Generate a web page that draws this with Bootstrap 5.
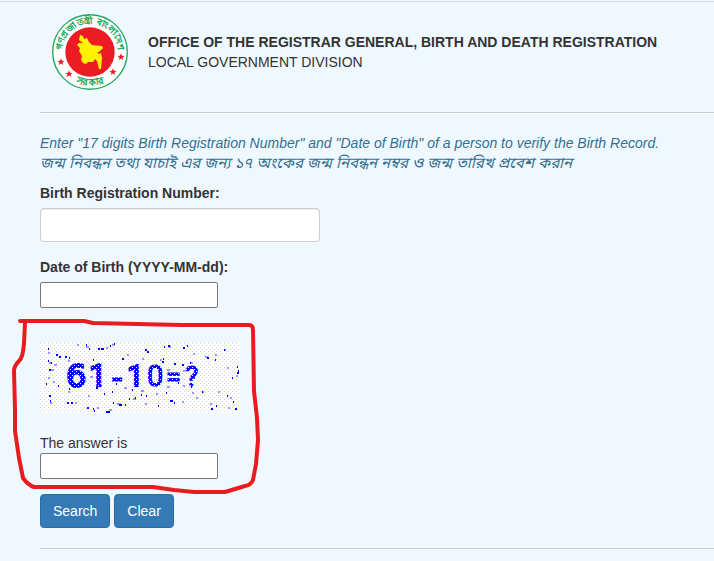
<!DOCTYPE html>
<html lang="en">
<head>
<meta charset="utf-8">
<meta name="viewport" content="width=device-width, initial-scale=1">
<title>Birth and Death Registration</title>
<link href="https://cdn.jsdelivr.net/npm/bootstrap@5.3.0/dist/css/bootstrap.min.css" rel="stylesheet">
<style>
body { background: #f0f8ff; color: #333; font: 14px/20px "Liberation Sans", Arial, sans-serif; }
.page { border-top: 1px solid #ddd; margin-top: 1px; padding-left: 40px; }
.masthead { padding: 12px 0 22px 12px; gap: 20px; border-bottom: 1px solid #ccc; }
.masthead h1 { font-size: 14px; line-height: 20px; }
.hint { color: #31708f; margin: 20px 0 10px; }
.hint-bn { font-size: 15px; font-family: "Liberation Sans", "Noto Sans Bengali", "Lohit Bengali", sans-serif; }
.brn { width: 280px; height: 34px; border-color: #ccc; border-radius: 4px; margin: 5px 0 15px; box-shadow: inset 0 1px 1px rgba(0,0,0,.075); }
.plain { width: 178px; height: 26px; border: 1px solid #767676; border-radius: 2px; padding: 1px 4px; background: #fff; }
.dob { margin-top: 5px; }
.challenge { padding: 35px 0 15px; }
.sketch { left: -28px; top: 10px; pointer-events: none; }
.captcha { margin-bottom: 20px; }
.btn-form { --bs-btn-color: #fff; --bs-btn-bg: #337ab7; --bs-btn-border-color: #2e6da4; --bs-btn-hover-color: #fff; --bs-btn-hover-bg: #286090; --bs-btn-font-size: 14px; --bs-btn-line-height: 20px; --bs-btn-padding-x: 12px; --bs-btn-padding-y: 6px; --bs-btn-border-radius: 4px; }
.actions { padding-bottom: 20px; border-bottom: 1px solid #ccc; }
</style>
<script src="https://cdn.jsdelivr.net/npm/bootstrap@5.3.0/dist/js/bootstrap.bundle.min.js" defer></script>
</head>
<body>
<div class="page">
  <header class="masthead d-flex align-items-center">
    <svg width="76" height="76" viewBox="0 0 76 76" role="img" aria-label="Government seal">
      <defs>
        <path id="arcTop" d="M10.500 43A28 28 0 1 1 65.500 43"/>
        <path id="arcBottom" d="M14 64A42 42 0 0 0 62 64"/>
        <path id="star" d="M0-3.700L1-1.200L3.600-1.100L1.500.5L2.300 3.100L0 1.600L-2.300 3.100L-1.500.5L-3.600-1.100L-1-1.200Z"/>
      </defs>
      <circle cx="38" cy="38" r="37.300" fill="#fff" stroke="#22ab62" stroke-width="1.400"/>
      <circle cx="38" cy="38" r="24.700" fill="#ed1c24"/>
      <path fill="#fff200" d="M28 21L31 22L32 25L35 24L37 28L40 31L50 32L51 34L47 38L45 38L47 40L49 39L50 44L49 55L47 55L45 47L43 45L41 48L36 48L34 50L31 49L29 46L30 42L27 37L28 34L25 31L27 29L31 29L27 26Z"/>
      <g fill="#ed1c24"><use href="#star" x="9" y="48"/><use href="#star" x="17" y="60"/><use href="#star" x="61" y="58"/><use href="#star" x="69" y="43"/></g>
      <g fill="#16a65a" stroke="#16a65a" stroke-width=".4" font-size="9">
        <text text-anchor="middle"><textPath href="#arcTop" startOffset="50%">গণপ্রজাতন্ত্রী বাংলাদেশ</textPath></text>
        <text text-anchor="middle" font-size="10"><textPath href="#arcBottom" startOffset="50%">সরকার</textPath></text>
      </g>
    </svg>
    <div>
      <h1 class="fw-bold m-0">OFFICE OF THE REGISTRAR GENERAL, BIRTH AND DEATH REGISTRATION</h1>
      <div>LOCAL GOVERNMENT DIVISION</div>
    </div>
  </header>

  <form>
    <div class="hint fst-italic">
      <div>Enter "17 digits Birth Registration Number" and "Date of Birth" of a person to verify the Birth Record.</div>
      <div class="hint-bn" lang="bn">জন্ম নিবন্ধন তথ্য যাচাই এর জন্য ১৭ অংকের জন্ম নিবন্ধন নম্বর ও জন্ম তারিখ প্রবেশ করান</div>
    </div>
    <label class="fw-bold d-block" for="brn">Birth Registration Number:</label>
    <input class="form-control brn" id="brn" type="text">
    <label class="fw-bold d-block" for="dob">Date of Birth (YYYY-MM-dd):</label>
    <input class="plain dob d-block" id="dob" type="text">

    <div class="challenge position-relative">
      <svg class="captcha d-block" width="200" height="70" viewBox="0 0 200 70">
        <defs>
          <pattern id="weave" width="4" height="4" patternUnits="userSpaceOnUse"><rect width="4" height="4" fill="#fff"/><path fill="#d1d8cf" d="M0 0h1v1h-1zM2 2h1v1h-1z"/></pattern>
          <pattern id="specks" width="28" height="20" patternUnits="userSpaceOnUse"><path fill="#dcc2e4" d="M4 4h1v1h-1zM18 6h1v1h-1zM10 12h1v1h-1zM24 16h1v1h-1z"/></pattern>
          <pattern id="holes" width="4" height="4" patternUnits="userSpaceOnUse"><rect width="4" height="4" fill="#0000ff"/><path fill="#fff" d="M0 0h1v1h-1zM2 2h1v1h-1z"/></pattern>
        </defs>
        <rect width="200" height="70" fill="url(#weave)"/>
        <rect width="200" height="70" fill="url(#specks)"/>
        <path stroke="#9a94fb" stroke-width="2" fill="none" d="M37 2h2M46 4h3M66 5h2M72 2h2M8 10h2M9 20h2M14 22h3M87 12h2M102 16h2M11 27h3M8 35h2M13 39h2M28 18h2M50 34h3M60 43h2M84 45h3M101 48h3M93 56h3M69 67h3M48 53h2M35 60h2M28 49h2M10 60h2M111 42h2M116 51h2M127 44h3M143 43h2M152 50h2M162 49h2M178 49h2M190 55h2M184 7h2M175 12h2M165 14h3M151 20h2M143 28h2M153 11h2M129 4h2M127 27h3M120 17h2M187 25h2M196 33h2M188 65h2M170 61h2M156 55h2M142 59h2M105 61h2M77 61h4M57 65h2"/>
        <path stroke="#0000ff" stroke-width="2" fill="none" d="M8 6h1M46 2h1M49 6h1M58 6h2M61 6h3M70 3h1M74 1h1M16 12h2M19 14h2M25 14h2M29 15h1M8 18h1M11 20h1M9 27h2M53 17h1M82 16h2M105 7h2M107 9h2M124 4h1M128 3h2M143 5h2M147 3h1M184 7h1M167 15h2M175 17h1M150 20h1M142 22h2M134 21h2M122 19h2M123 16h1M117 25h1M197 24h1M198 28h1M197 30h2M192 35h1M187 53h1M193 59h1M195 66h2M171 66h2M176 63h1M162 49h1M154 35h1M151 44h1M138 40h1M119 41h1M126 50h1M130 58h3M134 60h1M118 63h1M95 55h1M106 53h1M101 52h1M92 47h1M76 41h1M72 49h1M64 51h1M56 45h2M9 53h2M10 58h1M6 41h1M18 43h1M29 46h1M27 60h2M31 60h2M47 65h2M53 66h1M54 68h1M66 69h4M73 60h1M79 62h3M85 62h1M89 56h1"/>
        <g fill="url(#holes)" stroke="url(#holes)" font-family="Roboto, sans-serif">
          <text y="44" x="26" font-size="32" font-family="DejaVu Sans, sans-serif" stroke-width="2">6</text>
          <text y="43" x="49" font-size="31" stroke-width="2">1</text>
          <text y="46" x="71" font-size="36" font-family="Liberation Sans, sans-serif" stroke-width="1">-</text>
          <text y="43" x="87" font-size="30" stroke-width="2">1</text>
          <text y="43" x="107" font-size="29" stroke-width="1">0</text>
          <text y="43" x="126" font-size="27" stroke-width="1">=</text>
          <text y="43" x="145" font-size="28" stroke-width="1">?</text>
        </g>
      </svg>
      <label class="d-block" for="answer">The answer is</label>
      <input class="plain d-block" id="answer" type="text">
      <svg class="sketch position-absolute" width="250" height="176" viewBox="12 318 250 176" fill="none" stroke="#e81c1f" stroke-width="4" stroke-linecap="round" stroke-linejoin="round" aria-hidden="true">
        <path d="M20 321H84L93 323L181 325H249Q253 325 253 330L254 391L257 418L258 440L256 464L253 480Q251 485 245 486L225 492H194L174 490L153 487H34Q28 485 23 478L19 458L15 431V410L14 371Q14 366 19 361Q23 358 24 343L25 323"/>
      </svg>
    </div>

    <div class="actions d-flex gap-1">
      <button type="submit" class="btn btn-form">Search</button>
      <button type="reset" class="btn btn-form">Clear</button>
    </div>
  </form>
</div>
</body>
</html>
